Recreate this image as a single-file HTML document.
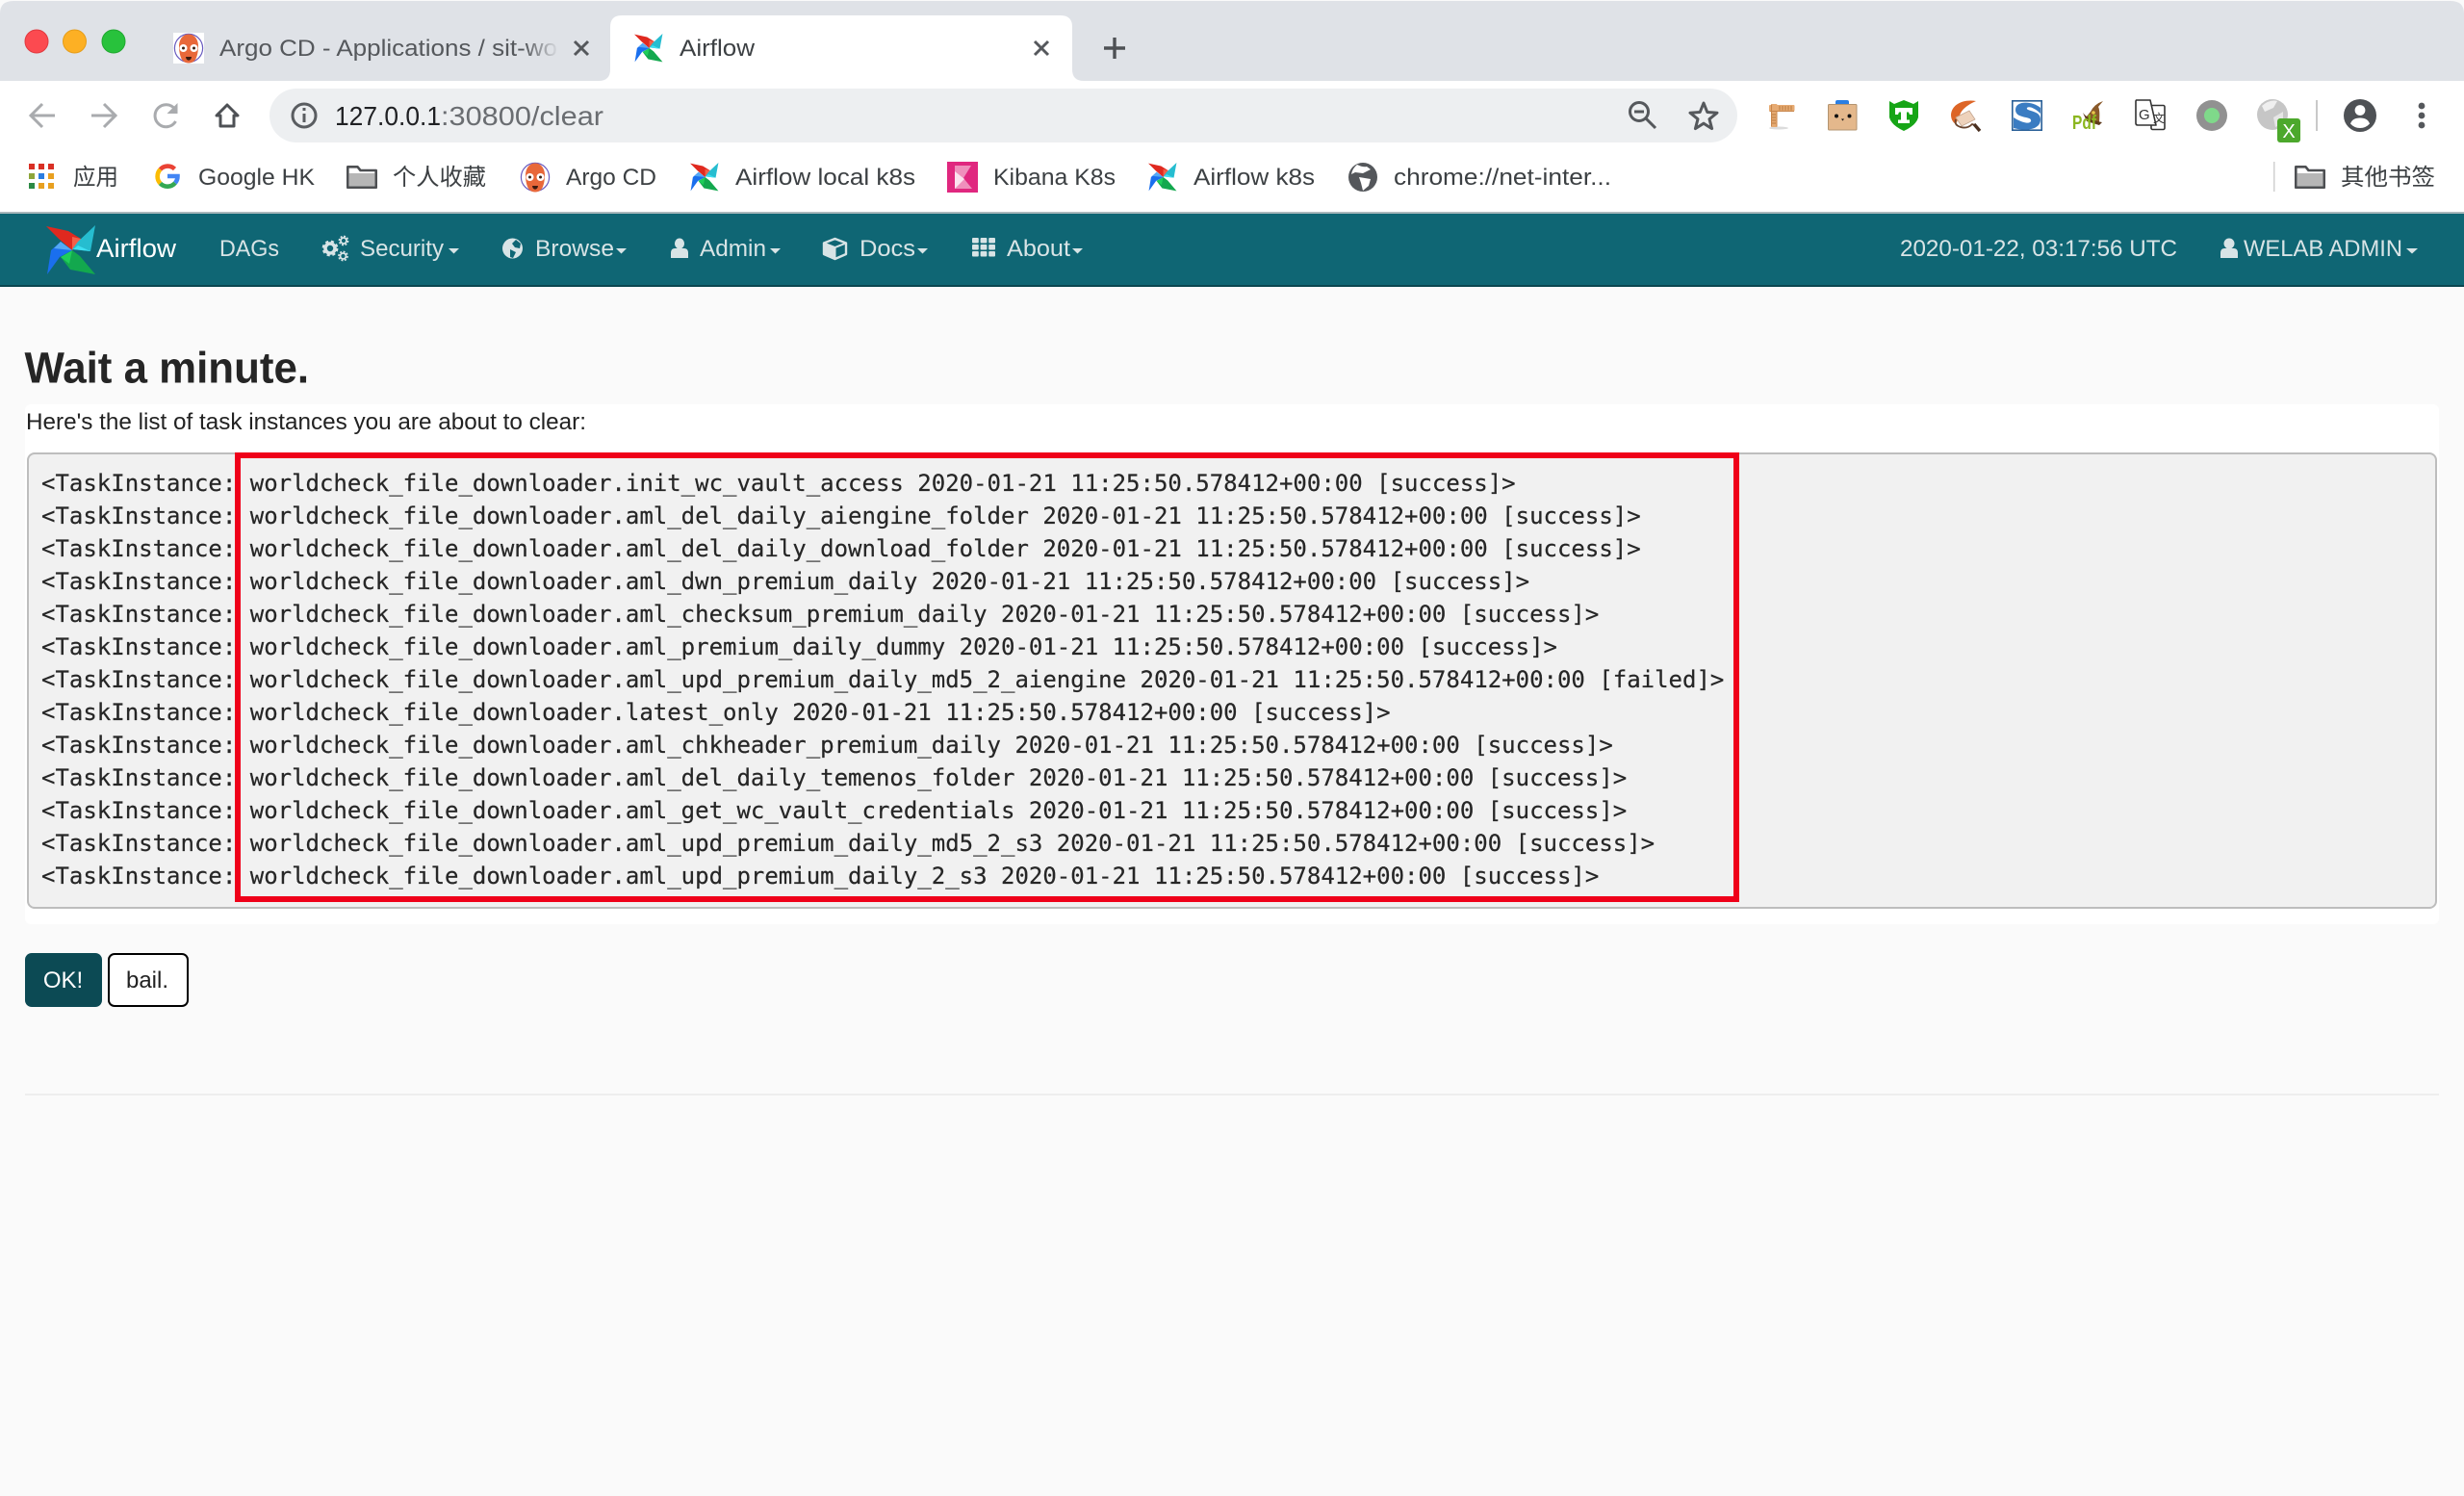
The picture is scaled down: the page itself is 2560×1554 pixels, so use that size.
<!DOCTYPE html>
<html lang="en"><head><meta charset="utf-8"><title>Airflow</title>
<style>
html,body{margin:0;padding:0;width:2560px;height:1554px;overflow:hidden;background:#fff}
svg{display:block;position:absolute;left:0;top:0}
text{font-family:"Liberation Sans","Noto Sans CJK SC",sans-serif;white-space:pre}
.t{font-size:24px;fill:#3c4043}
.n{font-size:24px;fill:#d8e4e6}
.m{font-family:"DejaVu Sans Mono","Liberation Mono",monospace;font-size:24px;fill:#262626;stroke:#262626;stroke-width:.2px}
</style></head><body>
<svg width="2560" height="1554" viewBox="0 0 2560 1554" xmlns="http://www.w3.org/2000/svg">
<defs>
<symbol id="pin" viewBox="0 0 52 52">
<path d="M0 1 L23 6 L36 14 L27 26 L13 14Z" fill="#e0291f"/>
<path d="M27 12 L36 14 L27 26Z" fill="#f4604a"/>
<path d="M51 0 L46 27 L27 25 L33 17Z" fill="#26bdd0"/>
<path d="M33 21 L46 27 L28 25Z" fill="#3fe0f2"/>
<path d="M51 51 L25 46 L15 33 L27 26 L35 32Z" fill="#13a84e"/>
<path d="M27 26 L24 40 L15 33Z" fill="#1fce5a"/>
<path d="M1 51 L5 26 L15 17 L27 26 L14 33Z" fill="#1a6fee"/>
<path d="M15 17 L27 26 L8 24Z" fill="#54a9f5"/>
</symbol>
<symbol id="argo" viewBox="0 0 32 32">
<rect width="32" height="32" fill="#fff"/>
<circle cx="16" cy="16" r="14.6" fill="#fff" stroke="#6a5cc0" stroke-width="1.2"/>
<path d="M16 1.5C22 1.5 26 7 26 14C26 19 25 24 23.5 27C22 30 19 31.5 16 31.5C13 31.5 10 30 8.5 27C7 24 6 19 6 14C6 7 10 1.5 16 1.5Z" fill="#e8683a"/>
<circle cx="10.5" cy="16" r="4" fill="#fff"/><circle cx="21.5" cy="16" r="4" fill="#fff"/>
<circle cx="10.5" cy="16" r="1.5" fill="#3a2418"/><circle cx="21.5" cy="16" r="1.5" fill="#3a2418"/>
<path d="M13 25H19C18.6 28 17.2 28.6 16 28.6C14.8 28.6 13.4 28 13 25Z" fill="#3a1a10"/>
</symbol>
<symbol id="folder" viewBox="0 0 32 24">
<path d="M1.3 22.7V1.3H11.5L14.5 5H30.7V22.7Z" fill="#fff" stroke="#4d4f52" stroke-width="2.6" stroke-linejoin="round"/>
<rect x="2.6" y="8" width="26.8" height="13.4" fill="#b6b6b6"/>
</symbol>
<linearGradient id="fade" x1="0" x2="1" y1="0" y2="0"><stop offset="0" stop-color="#dfe2e7" stop-opacity="0"/><stop offset="1" stop-color="#dfe2e7"/></linearGradient>
</defs>

<!-- page background -->
<rect width="2560" height="1554" fill="#fafafa"/>

<!-- browser chrome -->
<rect y="84" width="2560" height="137" fill="#fff"/>
<path d="M0 84V14Q0 1 14 1H2546Q2560 1 2560 14V84Z" fill="#dfe2e7"/>
<path d="M622 84Q634 84 634 72V28Q634 16 646 16H1102Q1114 16 1114 28V72Q1114 84 1126 84Z" fill="#fff"/>

<circle cx="38" cy="43" r="12" fill="#fc4a50" stroke="#e0393f" stroke-width="1"/>
<circle cx="77.5" cy="43" r="12" fill="#fdb024" stroke="#e59d1a" stroke-width="1"/>
<circle cx="118" cy="43" r="12" fill="#28c23c" stroke="#1fa82f" stroke-width="1"/>

<use href="#argo" x="180" y="34" width="32" height="32"/>
<text class="t" x="228" y="58" style="fill:#55585c" textLength="351" lengthAdjust="spacingAndGlyphs">Argo CD - Applications / sit-wo</text>
<rect x="545" y="30" width="36" height="40" fill="url(#fade)"/>
<path d="M597 43L611 57M611 43L597 57" stroke="#55585c" stroke-width="3" fill="none"/>

<use href="#pin" x="658" y="35" width="32" height="30"/>
<text class="t" x="706" y="58" textLength="78" lengthAdjust="spacingAndGlyphs">Airflow</text>
<path d="M1075 43L1089 57M1089 43L1075 57" stroke="#55585c" stroke-width="3" fill="none"/>
<path d="M1158 39V61M1147 50H1169" stroke="#4e5155" stroke-width="3.4" fill="none"/>

<!-- toolbar -->
<path d="M57 120H33M44 108L32 120L44 132" stroke="#a9abae" stroke-width="3" fill="none"/>
<path d="M95 120H119M108 108L120 120L108 132" stroke="#a9abae" stroke-width="3" fill="none"/>
<path d="M181.5 113A11.5 11.5 0 1 0 182.5 126" stroke="#a9abae" stroke-width="3" fill="none"/>
<path d="M184.5 107V118H173.5Z" fill="#a9abae"/>
<path d="M225 120L236 109L247 120H243V131H229V120Z" stroke="#4e5155" stroke-width="3" fill="none" stroke-linejoin="round"/>

<rect x="280" y="92" width="1525" height="56" rx="28" fill="#edeff1"/>
<circle cx="316" cy="120" r="12" fill="none" stroke="#5a5d61" stroke-width="3"/>
<path d="M316 118V127M316 112V115" stroke="#5a5d61" stroke-width="3" fill="none"/>
<text x="348" y="130" font-size="28" fill="#202124" textLength="110" lengthAdjust="spacingAndGlyphs">127.0.0.1</text>
<text x="458" y="130" font-size="28" fill="#6a6d71" textLength="169" lengthAdjust="spacingAndGlyphs">:30800/clear</text>

<circle cx="1703" cy="116" r="9.5" fill="none" stroke="#55585c" stroke-width="3"/>
<path d="M1710 123L1720 133M1698 116H1708" stroke="#55585c" stroke-width="3" fill="none"/>
<path d="M1770 107L1773.8 116.5L1784 117.2L1776 123.7L1778.6 133.6L1770 128.2L1761.4 133.6L1764 123.7L1756 117.2L1766.2 116.5Z" fill="none" stroke="#55585c" stroke-width="3" stroke-linejoin="round"/>

<!-- extensions -->
<ellipse cx="1848" cy="133" rx="10" ry="1.5" fill="#dcdcdc"/>
<rect x="1840" y="108" width="6.5" height="24" rx="1" fill="#e6aa72"/>
<rect x="1838" y="109" width="26.5" height="6.5" rx="1" fill="#e6aa72"/>
<path d="M1840.5 108.5V131.5M1846 116V131.5M1838.5 115.5H1864" stroke="#c8854a" stroke-width="1" fill="none"/>
<path d="M1849 110V114.5M1852 110V114.5M1855 110V114.5M1858 110V114.5M1861 110V114.5M1841 119H1845M1841 122H1845M1841 125H1845M1841 128H1845" stroke="#b87a3e" stroke-width="1"/>

<rect x="1899.5" y="108.5" width="29.5" height="26.5" rx="1" fill="#e4b88c" stroke="#b39470" stroke-width="1"/>
<path d="M1907 108V106Q1907 104 1909 104H1919Q1921 104 1921 106V108Z" fill="#2a7fe4"/>
<circle cx="1908" cy="120.5" r="2" fill="#111"/><circle cx="1921.5" cy="120.5" r="2" fill="#111"/>
<path d="M1913 123.5H1916L1914.5 125.5Z" fill="#111"/>

<path d="M1963 105L1968 108L1973 106L1978 104L1983 106L1988 108L1993 105V122Q1991 130 1978 136Q1965 130 1963 122Z" fill="#17a517"/>
<path d="M1969 112H1987V119H1984L1983 116.5H1981V124.5H1984V128H1972V124.5H1975V116.5H1973L1972 119H1969Z" fill="#fff"/>

<path d="M2053 105C2042 103 2028 107 2027 119C2027 124 2029 127 2032 129L2036 120C2038 113 2046 108 2053 105Z" fill="#dd6526"/>
<path d="M2032 122L2046 115L2052 124L2038 131Z" fill="#eed2bb" stroke="#c4a58e" stroke-width=".8"/>
<path d="M2032 124Q2030 130 2037 132Q2044 134 2049 129L2052 130" stroke="#6a4630" stroke-width="1.8" fill="none"/>
<path d="M2051 129L2057 136" stroke="#4a3020" stroke-width="3.4"/>

<rect x="2090" y="104" width="32" height="32" fill="#fff"/>
<path d="M2090.8 104.8H2121.2V135.2H2090.8Z" fill="none" stroke="#2a6098" stroke-width="1.6"/>
<path d="M2120 112C2112 105 2094 104 2094 114C2094 124 2112 120 2110 126C2108 130 2098 126 2092 122V133C2102 136 2120 136 2120 124C2120 114 2104 116 2106 112C2108 110 2114 112 2120 118Z" fill="#3a7cc2"/>

<path d="M2185 105Q2176 108 2172 116L2167 122L2181 127Q2182 114 2180 111Z" fill="#8a5a2a"/>
<path d="M2164 117Q2170 125 2184 127L2181 130L2168 126Z" fill="#5e3a1c"/>
<circle cx="2175" cy="117" r="1.8" fill="#e8c64a"/>
<text x="2153" y="134" font-size="20" font-weight="700" fill="#8bb61f" textLength="25" lengthAdjust="spacingAndGlyphs">Pdf</text>

<rect x="2235" y="109.5" width="14" height="25" rx="1.5" fill="#fff" stroke="#333" stroke-width="1.6"/>
<path d="M2219.5 104H2234L2240 130H2221Q2219 130 2219 128V105Z" fill="#fff" stroke="#333" stroke-width="1.6" stroke-linejoin="round"/>
<text x="2222" y="124" font-size="15" fill="#333">G</text>
<text x="2237" y="127" font-size="12" fill="#333">文</text>

<circle cx="2298" cy="120" r="16" fill="#919191"/><circle cx="2298" cy="120" r="8" fill="#7fd98a"/>

<circle cx="2361" cy="119" r="16" fill="#c6c6c6"/>
<path d="M2350 110Q2358 103 2366 105L2362 112L2353 116Z" fill="#efefef"/>
<path d="M2362 122L2372 116L2372 128L2364 132Z" fill="#e6e6e6"/>
<rect x="2366" y="123" width="24" height="25" rx="3" fill="#4ca82c"/>
<text x="2378" y="143" font-size="20" fill="#fff" text-anchor="middle">X</text>

<rect x="2406" y="104" width="2" height="32" fill="#c9c9c9"/>
<circle cx="2452" cy="120" r="17" fill="#4e5155"/>
<circle cx="2452" cy="114.5" r="5.4" fill="#fff"/>
<path d="M2442 128.5Q2444 122.5 2452 122.5Q2460 122.5 2462 128.5Q2458 133 2452 133Q2446 133 2442 128.5Z" fill="#fff"/>
<circle cx="2516" cy="110" r="3.4" fill="#55585c"/><circle cx="2516" cy="120" r="3.4" fill="#55585c"/><circle cx="2516" cy="130" r="3.4" fill="#55585c"/>

<!-- bookmarks -->
<g>
<rect x="30" y="170" width="6" height="6" fill="#d93025"/><rect x="40" y="170" width="6" height="6" fill="#d93025"/><rect x="50" y="170" width="6" height="6" fill="#d93025"/>
<rect x="30" y="180" width="6" height="6" fill="#8da53a"/><rect x="40" y="180" width="6" height="6" fill="#2a7de1"/><rect x="50" y="180" width="6" height="6" fill="#e8a020"/>
<rect x="30" y="190" width="6" height="6" fill="#2d8a45"/><rect x="40" y="190" width="6" height="6" fill="#e8a020"/><rect x="50" y="190" width="6" height="6" fill="#e8a020"/>
</g>
<text class="t" x="76" y="192" textLength="47" lengthAdjust="spacingAndGlyphs">应用</text>

<path d="M181.5 175.5A10.5 10.5 0 0 0 166.5 176" fill="none" stroke="#ea4335" stroke-width="4.6"/>
<path d="M166.5 176A10.5 10.5 0 0 0 166.5 190.5" fill="none" stroke="#fbbc05" stroke-width="4.6"/>
<path d="M166.5 190.5A10.5 10.5 0 0 0 182 190" fill="none" stroke="#34a853" stroke-width="4.6"/>
<path d="M182 190A10.5 10.5 0 0 0 184.5 183H174" fill="none" stroke="#4285f4" stroke-width="4.6"/>
<text class="t" x="206" y="192" textLength="121" lengthAdjust="spacingAndGlyphs">Google HK</text>

<use href="#folder" x="360" y="172" width="32" height="24"/>
<text class="t" x="408" y="192" textLength="97" lengthAdjust="spacingAndGlyphs">个人收藏</text>

<use href="#argo" x="540" y="168" width="32" height="32"/>
<text class="t" x="588" y="192" textLength="94" lengthAdjust="spacingAndGlyphs">Argo CD</text>

<use href="#pin" x="716" y="169" width="32" height="30"/>
<text class="t" x="764" y="192" textLength="187" lengthAdjust="spacingAndGlyphs">Airflow local k8s</text>

<rect x="984" y="168" width="32" height="32" fill="#e0277f"/>
<path d="M992 172H1009L1001 185L1010 196H992Z" fill="#ef8fbc"/>
<path d="M992 196V178L1002 186Z" fill="#fbe2ee"/>
<text class="t" x="1032" y="192" textLength="127" lengthAdjust="spacingAndGlyphs">Kibana K8s</text>

<use href="#pin" x="1192" y="169" width="32" height="30"/>
<text class="t" x="1240" y="192" textLength="126" lengthAdjust="spacingAndGlyphs">Airflow k8s</text>

<circle cx="1416" cy="184" r="15" fill="#54575b"/>
<path d="M1410 171Q1416 174 1420 173L1424 176L1416 180L1408 179L1404 181Q1405 175 1410 171Z" fill="#fff"/>
<path d="M1412 184L1424 186L1422 193L1416 198L1414 190Z" fill="#fff"/>
<text class="t" x="1448" y="192" textLength="226" lengthAdjust="spacingAndGlyphs">chrome://net-inter...</text>

<rect x="2362" y="168" width="1.5" height="31" fill="#d0d0d0"/>
<use href="#folder" x="2384" y="172" width="32" height="24"/>
<text class="t" x="2432" y="192" textLength="98" lengthAdjust="spacingAndGlyphs">其他书签</text>

<!-- navbar -->
<rect y="220" width="2560" height="2" fill="#aab8bc"/>
<rect y="222" width="2560" height="74" fill="#0f6674"/>
<rect y="296" width="2560" height="2" fill="#0a4650"/>

<use href="#pin" x="48" y="234" width="52" height="52"/>
<text x="100" y="267" font-size="27" fill="#fff" textLength="83" lengthAdjust="spacingAndGlyphs">Airflow</text>
<text class="n" x="228" y="266" textLength="62" lengthAdjust="spacingAndGlyphs">DAGs</text>

<!-- security gears -->
<circle cx="343" cy="258" r="5" fill="none" stroke="#d8e4e6" stroke-width="3.6"/>
<circle cx="343" cy="258" r="7" fill="none" stroke="#d8e4e6" stroke-width="2.8" stroke-dasharray="3 2.6"/>
<circle cx="357" cy="250" r="3" fill="none" stroke="#d8e4e6" stroke-width="1.8"/>
<circle cx="357" cy="250" r="4.6" fill="none" stroke="#d8e4e6" stroke-width="1.6" stroke-dasharray="2 1.6"/>
<circle cx="356.5" cy="266" r="3" fill="none" stroke="#d8e4e6" stroke-width="1.8"/>
<circle cx="356.5" cy="266" r="4.6" fill="none" stroke="#d8e4e6" stroke-width="1.6" stroke-dasharray="2 1.6"/>
<text class="n" x="374" y="266" textLength="87" lengthAdjust="spacingAndGlyphs">Security</text>
<path d="M466 258H477L471.5 263.5Z" fill="#d8e4e6"/>

<!-- browse globe -->
<circle cx="532.5" cy="258" r="10.5" fill="#d8e4e6"/>
<path d="M536 249L541 253L540 258L535 257L532 253ZM530 259L536 262L533 268L530 267Z" fill="#0f6674"/>
<text class="n" x="556" y="266" textLength="82" lengthAdjust="spacingAndGlyphs">Browse</text>
<path d="M640 258H651L645.5 263.5Z" fill="#d8e4e6"/>

<!-- admin user -->
<ellipse cx="706" cy="253" rx="5" ry="5.5" fill="#d8e4e6"/>
<path d="M697 268V263Q697 258 701 258H711Q715 258 715 263V268Z" fill="#d8e4e6"/>
<text class="n" x="727" y="266" textLength="69" lengthAdjust="spacingAndGlyphs">Admin</text>
<path d="M800 258H811L805.5 263.5Z" fill="#d8e4e6"/>

<!-- docs cube -->
<path d="M867.5 248L879 252.5V264L867.5 269L856 264V252.5Z" fill="none" stroke="#d8e4e6" stroke-width="2.4" stroke-linejoin="round"/>
<path d="M856 252.5L867.5 257L879 252.5M867.5 257V269" fill="none" stroke="#d8e4e6" stroke-width="2"/>
<path d="M856.5 253L867 257V268L856.5 264Z" fill="#d8e4e6"/>
<text class="n" x="893" y="266" textLength="58" lengthAdjust="spacingAndGlyphs">Docs</text>
<path d="M953 258H964L958.5 263.5Z" fill="#d8e4e6"/>

<!-- about grid -->
<g fill="#d8e4e6">
<rect x="1010" y="247" width="6.8" height="5.5" rx="1"/><rect x="1018.6" y="247" width="6.8" height="5.5" rx="1"/><rect x="1027.2" y="247" width="6.8" height="5.5" rx="1"/>
<rect x="1010" y="254" width="6.8" height="5.5" rx="1"/><rect x="1018.6" y="254" width="6.8" height="5.5" rx="1"/><rect x="1027.2" y="254" width="6.8" height="5.5" rx="1"/>
<rect x="1010" y="261" width="6.8" height="5.5" rx="1"/><rect x="1018.6" y="261" width="6.8" height="5.5" rx="1"/><rect x="1027.2" y="261" width="6.8" height="5.5" rx="1"/>
</g>
<text class="n" x="1046" y="266" textLength="66" lengthAdjust="spacingAndGlyphs">About</text>
<path d="M1114 258H1125L1119.5 263.5Z" fill="#d8e4e6"/>

<text class="n" x="1974" y="266" textLength="288" lengthAdjust="spacingAndGlyphs">2020-01-22, 03:17:56 UTC</text>
<ellipse cx="2316" cy="253" rx="5.5" ry="5.5" fill="#d8e4e6"/>
<path d="M2307 268V263Q2307 258 2311 258H2321Q2325 258 2325 263V268Z" fill="#d8e4e6"/>
<text class="n" x="2331" y="266" textLength="165" lengthAdjust="spacingAndGlyphs">WELAB ADMIN</text>
<path d="M2500 258H2512L2506 263.5Z" fill="#d8e4e6"/>

<!-- content -->
<text x="25.5" y="397.5" font-size="45" font-weight="700" fill="#252525" textLength="295.5" lengthAdjust="spacingAndGlyphs">Wait a minute.</text>

<rect x="26" y="420" width="2508" height="540" rx="6" fill="#fff"/>
<text x="27" y="446" font-size="24" fill="#222" textLength="582" lengthAdjust="spacingAndGlyphs">Here's the list of task instances you are about to clear:</text>

<rect x="29" y="471" width="2502" height="472" rx="7" fill="#f1f1f1" stroke="#bdbdbd" stroke-width="2"/>

<g>
<text class="m" x="43" y="510">&lt;TaskInstance: worldcheck_file_downloader.init_wc_vault_access 2020-01-21 11:25:50.578412+00:00 [success]&gt;</text>
<text class="m" x="43" y="544">&lt;TaskInstance: worldcheck_file_downloader.aml_del_daily_aiengine_folder 2020-01-21 11:25:50.578412+00:00 [success]&gt;</text>
<text class="m" x="43" y="578">&lt;TaskInstance: worldcheck_file_downloader.aml_del_daily_download_folder 2020-01-21 11:25:50.578412+00:00 [success]&gt;</text>
<text class="m" x="43" y="612">&lt;TaskInstance: worldcheck_file_downloader.aml_dwn_premium_daily 2020-01-21 11:25:50.578412+00:00 [success]&gt;</text>
<text class="m" x="43" y="646">&lt;TaskInstance: worldcheck_file_downloader.aml_checksum_premium_daily 2020-01-21 11:25:50.578412+00:00 [success]&gt;</text>
<text class="m" x="43" y="680">&lt;TaskInstance: worldcheck_file_downloader.aml_premium_daily_dummy 2020-01-21 11:25:50.578412+00:00 [success]&gt;</text>
<text class="m" x="43" y="714">&lt;TaskInstance: worldcheck_file_downloader.aml_upd_premium_daily_md5_2_aiengine 2020-01-21 11:25:50.578412+00:00 [failed]&gt;</text>
<text class="m" x="43" y="748">&lt;TaskInstance: worldcheck_file_downloader.latest_only 2020-01-21 11:25:50.578412+00:00 [success]&gt;</text>
<text class="m" x="43" y="782">&lt;TaskInstance: worldcheck_file_downloader.aml_chkheader_premium_daily 2020-01-21 11:25:50.578412+00:00 [success]&gt;</text>
<text class="m" x="43" y="816">&lt;TaskInstance: worldcheck_file_downloader.aml_del_daily_temenos_folder 2020-01-21 11:25:50.578412+00:00 [success]&gt;</text>
<text class="m" x="43" y="850">&lt;TaskInstance: worldcheck_file_downloader.aml_get_wc_vault_credentials 2020-01-21 11:25:50.578412+00:00 [success]&gt;</text>
<text class="m" x="43" y="884">&lt;TaskInstance: worldcheck_file_downloader.aml_upd_premium_daily_md5_2_s3 2020-01-21 11:25:50.578412+00:00 [success]&gt;</text>
<text class="m" x="43" y="918">&lt;TaskInstance: worldcheck_file_downloader.aml_upd_premium_daily_2_s3 2020-01-21 11:25:50.578412+00:00 [success]&gt;</text>
</g>

<rect x="247" y="473" width="557" height="461" fill="none" stroke="none"/>
<rect x="247" y="473" width="1557" height="461" fill="none" stroke="#ef0019" stroke-width="6"/>

<rect x="26" y="990" width="80" height="56" rx="7" fill="#0c4a54"/>
<text x="65.5" y="1026" font-size="24" fill="#fff" text-anchor="middle">OK!</text>
<rect x="113" y="991" width="82" height="54" rx="6" fill="#fff" stroke="#000" stroke-width="2"/>
<text x="153" y="1026" font-size="24" fill="#222" text-anchor="middle">bail.</text>

<rect x="26" y="1136" width="2508" height="2" fill="#eeeeee"/>
</svg>
</body></html>
